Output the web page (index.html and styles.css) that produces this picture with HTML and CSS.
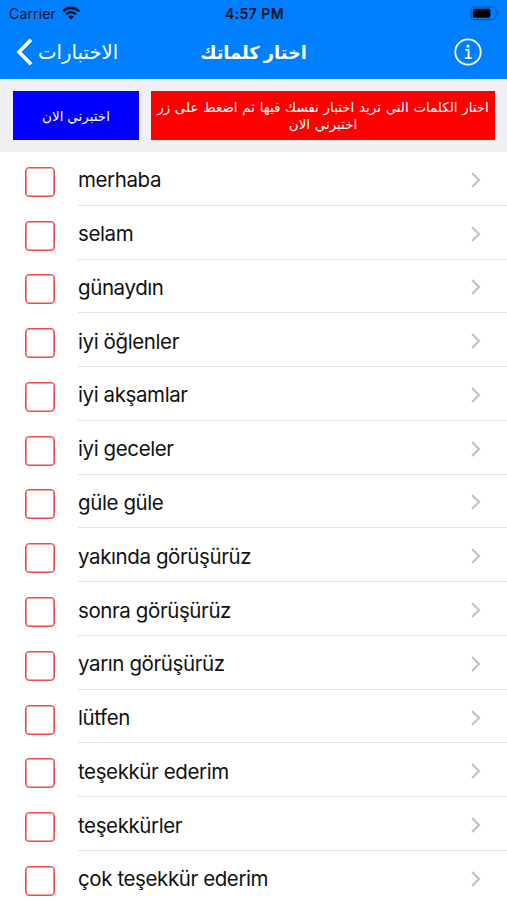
FILE: index.html
```html
<!DOCTYPE html>
<html lang="ar">
<head>
    <meta charset="UTF-8">
    <meta name="viewport" content="width=device-width, initial-scale=1.0">
    <title>اختار كلماتك</title>
    <link rel="stylesheet" href="styles.css">
</head>
<body>
    <header>
        <div class="status-bar">
            <div class="carrier">
                <span>Carrier</span>
                <svg class="wifi" width="18" height="14" viewBox="0 0 18 14" fill="none" stroke="#001126" stroke-width="2.6">
                    <path d="M1 5.2C5.5 0.7 12.5 0.7 17 5.2"/>
                    <path d="M4 8.4C6.9 5.5 11.1 5.5 14 8.4"/>
                    <path d="M9 13.6L6.2 10.7C7.8 9.2 10.2 9.2 11.8 10.7Z" fill="#001126" stroke="none"/>
                </svg>
            </div>
            <span class="time">4:57 PM</span>
            <svg class="battery" width="30" height="15" viewBox="0 0 30 15">
                <rect x="1" y="1" width="25" height="12.6" rx="3.6" fill="none" stroke="#0059b3" stroke-width="1.2"/>
                <rect x="2.8" y="2.8" width="17.6" height="9" rx="1.8" fill="#000"/>
                <path d="M27.6 5v4.6c1.9-.6 1.9-4 0-4.6z" fill="#0059b3"/>
            </svg>
        </div>
        <nav class="nav-bar">
            <a class="back">
                <svg width="17" height="28" viewBox="0 0 17 28" fill="none" stroke="#fff" stroke-width="3.6">
                    <path d="M15 1.8L3 14L15 26.2"/>
                </svg>
                <span dir="rtl">الاختبارات</span>
            </a>
            <h1 dir="rtl">اختار كلماتك</h1>
            <svg class="info" width="28" height="28" viewBox="0 0 28 28" fill="none" stroke="#fff" stroke-width="1.8">
                <circle cx="14" cy="14" r="12.7"/>
                <path d="M11.3 11.9H14.6V20M10.8 20.2H17.6"/>
                <circle cx="14" cy="8" r="1.6" fill="#fff" stroke="none"/>
            </svg>
        </nav>
    </header>

    <div class="toolbar">
        <button class="test-btn" dir="rtl">اختبرني الان</button>
        <p class="hint" dir="rtl">اختار الكلمات التي تريد اختبار نفسك فيها ثم اضغط على زر<br>اختبرني الان</p>
    </div>

    <ul class="words" id="words" lang="tr"></ul>

    <script>
        const words = [
            'merhaba', 'selam', 'günaydın', 'iyi öğlenler', 'iyi akşamlar',
            'iyi geceler', 'güle güle', 'yakında görüşürüz', 'sonra görüşürüz',
            'yarın görüşürüz', 'lütfen', 'teşekkür ederim', 'teşekkürler',
            'çok teşekkür ederim'
        ];
        const list = document.getElementById('words');

        words.forEach(function (word) {
            const item = document.createElement('li');
            item.innerHTML =
                '<span class="checkbox"></span>' +
                '<div class="row"><span class="word">' + word + '</span>' +
                '<svg class="chevron" width="10" height="16" viewBox="0 0 10 16" fill="none" stroke="#c2c2c5" stroke-width="2.2">' +
                '<path d="M1 1L8 8L1 15"/></svg></div>';
            list.appendChild(item);
        });
    </script>
</body>
</html>
```
FILE: styles.css
```css
* {
    box-sizing: border-box;
}

body {
    font-family: Inter, "DejaVu Sans", sans-serif;
    background-color: #fff;
    margin: 0;
    height: 900px;
    overflow: hidden;
}

header {
    background-color: #0080ff;
    height: 79px;
    color: #fff;
}

.status-bar {
    display: grid;
    grid-template-columns: 1fr auto 1fr;
    align-items: center;
    height: 27px;
    padding: 0 7px 0 9px;
    color: #001126;
    font-size: 14px;
}

.carrier {
    display: flex;
    align-items: center;
    gap: 6px;
    letter-spacing: 0.15px;
}

.wifi {
    margin-top: -1px;
}

.time {
    font-weight: 600;
    letter-spacing: 0.4px;
}

.battery {
    justify-self: end;
}

.nav-bar {
    display: grid;
    grid-template-columns: 1fr auto 1fr;
    align-items: center;
    height: 50px;
    padding: 0 16px;
}

.back {
    display: flex;
    align-items: center;
    gap: 5px;
    font-size: 19.7px;
}

h1 {
    margin: 0;
    font-size: 17.8px;
    font-weight: bold;
}

.info {
    justify-self: end;
    margin-right: 9px;
}

.toolbar {
    display: flex;
    gap: 12px;
    height: 73px;
    padding: 12px 12px 12px 13px;
    background-color: #efeff4;
}

.test-btn {
    width: 126px;
    height: 49px;
    padding: 0;
    border: none;
    background-color: #0000ff;
    color: #fff;
    font-family: inherit;
    font-size: 13.5px;
}

.hint {
    flex: 1;
    height: 49px;
    margin: 0;
    padding-top: 8px;
    background-color: #ff0000;
    color: #fff;
    font-size: 13.4px;
    line-height: 17px;
    text-align: center;
    white-space: nowrap;
    word-spacing: 1px;
}

.words {
    margin: 0;
    padding: 0;
    list-style: none;
}

li {
    display: flex;
    align-items: center;
    height: 53.77px;
    padding-left: 25px;
}

.checkbox {
    width: 30px;
    height: 30px;
    margin: 6px 23px 0 0;
    border: 1px solid #f04848;
    border-radius: 4px;
    box-shadow: inset 0 0 0 0.6px #f04848;
}

.row {
    display: flex;
    flex: 1;
    align-items: center;
    justify-content: space-between;
    height: 100%;
    padding: 3px 26px 0 0;
    border-bottom: 1px solid #e4e4e6;
}

.word {
    color: #111;
    font-size: 20.5px;
    letter-spacing: -0.4px;
}
```
